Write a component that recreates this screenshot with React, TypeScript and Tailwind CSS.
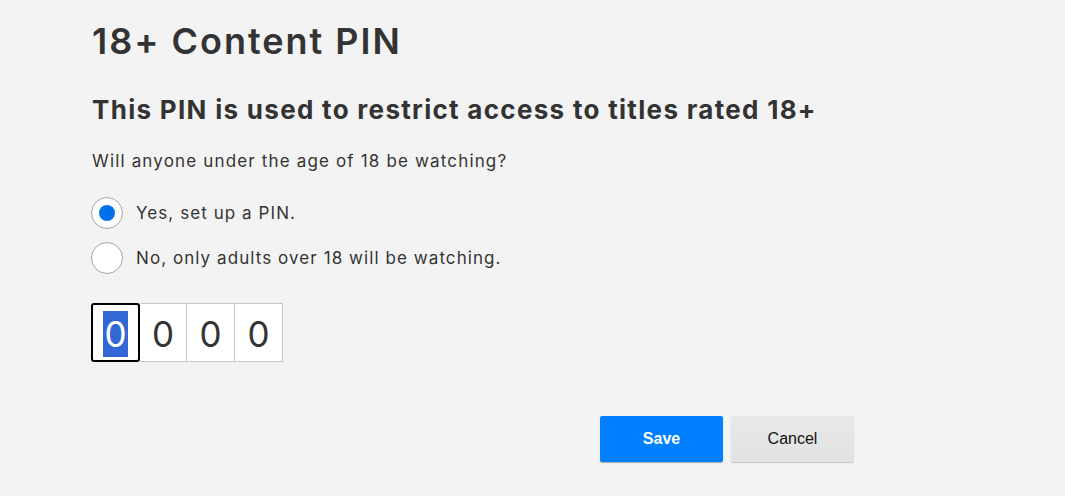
import { useState } from "react";

const options = [
  { id: "yes", label: "Yes, set up a PIN." },
  { id: "no", label: "No, only adults over 18 will be watching." },
];

const boxWidths = ["w-[49px]", "w-[47px]", "w-[48px]", "w-[48px]"];

function Radio({ checked }: { checked: boolean }) {
  return (
    <span className="w-8 h-8 rounded-full bg-white border border-[#a6a6a6] flex items-center justify-center shrink-0">
      {checked && <span className="w-4 h-4 rounded-full bg-[#0071eb]" />}
    </span>
  );
}

export default function App() {
  const [choice, setChoice] = useState("yes");
  const pin = ["0", "0", "0", "0"];

  return (
    <div className="min-h-screen bg-[#f3f3f3] text-[#333] font-['Inter',sans-serif]">
      <div className="pl-[92px] pt-[19px] w-[854px]">
        <h1 className="text-[36px] leading-[44px] font-semibold tracking-[0.055em]">18+ Content PIN</h1>

        <h2 className="mt-[31px] text-[26px] leading-[32px] font-bold tracking-[0.05em]">
          This PIN is used to restrict access to titles rated 18+
        </h2>

        <p className="mt-[23px] text-[17px] leading-[24px] tracking-[0.068em]">
          Will anyone under the age of 18 be watching?
        </p>

        <div className="mt-[24px] flex flex-col gap-[13px] -ml-px">
          {options.map((o) => (
            <label key={o.id} className="flex items-center gap-[13px] cursor-pointer" onClick={() => setChoice(o.id)}>
              <Radio checked={choice === o.id} />
              <span className="text-[17px] leading-[24px] tracking-[0.063em]">{o.label}</span>
            </label>
          ))}
        </div>

        <div className="mt-[29px] flex -ml-px">
          {pin.map((d, i) => (
            <div
              key={i}
              className={
                i === 0
                  ? "w-[49px] h-[59px] bg-white border-2 border-black rounded-[3px] flex items-center justify-center"
                  : `${boxWidths[i]} h-[59px] bg-white border border-l-0 border-[#c8c8c8] flex items-center justify-center`
              }
            >
              {i === 0 ? (
                <span className="bg-[#3367d6] text-white text-[35px] leading-[46px] px-px mt-[2px]">{d}</span>
              ) : (
                <span className="text-[35px] leading-[46px] mt-[2px]">{d}</span>
              )}
            </div>
          ))}
        </div>

        <div className="mt-[54px] flex justify-end gap-2 font-['Liberation_Sans',sans-serif]">
          <button className="w-[123px] h-[46px] rounded-[2px] bg-[#0080ff] text-white text-[16px] font-bold shadow-[0_1px_1px_rgba(0,0,0,0.3)]">
            Save
          </button>
          <button className="w-[123px] h-[46px] rounded-[2px] bg-gradient-to-b from-[#e8e8e8] to-[#e2e2e2] text-[#111] text-[16px] shadow-[0_1px_1px_rgba(0,0,0,0.2)]">
            Cancel
          </button>
        </div>
      </div>
    </div>
  );
}
